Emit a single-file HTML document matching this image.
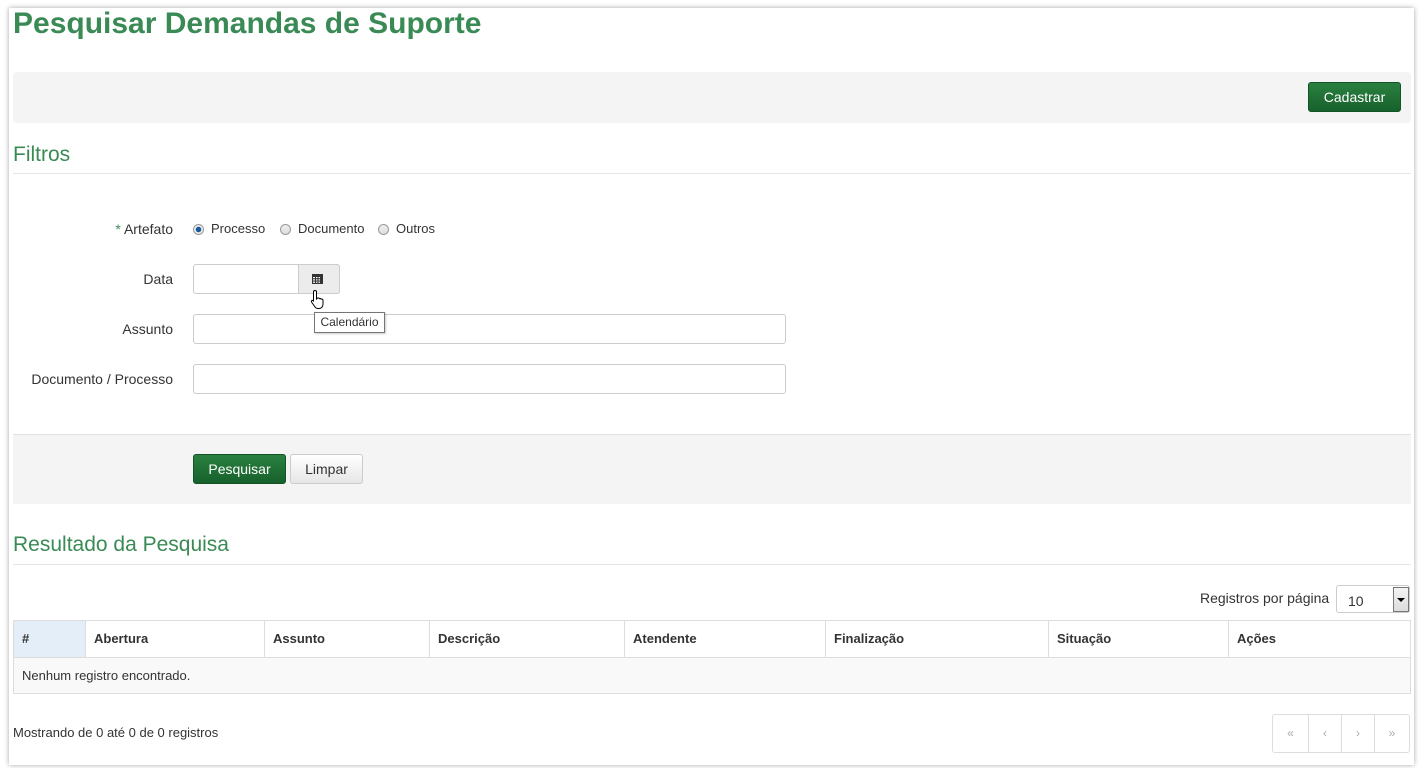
<!DOCTYPE html>
<html><head><meta charset="utf-8"><style>
*{box-sizing:border-box;margin:0;padding:0}
body{width:1423px;height:768px;background:#fff;font-family:"Liberation Sans",Arial,sans-serif;font-size:14px;color:#333;position:relative;overflow:hidden}
.a{position:absolute}
.page{left:9px;top:8px;width:1405px;height:757px;background:#fff;box-shadow:0 0 5px rgba(0,0,0,.35)}
.green{color:#3a8a55}
.bar{background:#f4f4f4;border-radius:4px}
.btn{border-radius:3px;text-align:center;font-size:14px}
.bg{background:linear-gradient(#2a8040,#17612c);color:#fff;border:1px solid #145326}
.lbl{text-align:right;width:160px;left:13px}
.inp{border:1px solid #ccc;border-radius:3px;background:#fff}
.rad{width:11px;height:11px;border-radius:50%;border:1px solid #999;background:linear-gradient(#eee,#ddd)}
.line{height:1px;background:#e5e5e5}
.th{font-weight:bold;font-size:13px;top:631px}
</style></head><body>
<div class="a page"></div>
<div class="a green" style="left:13px;top:7px;font-size:30px;font-weight:bold">Pesquisar Demandas de Suporte</div>
<div class="a bar" style="left:13px;top:72px;width:1398px;height:51px"></div>
<div class="a btn bg" style="left:1308px;top:82px;width:93px;height:30px;line-height:28px">Cadastrar</div>
<div class="a green" style="left:13px;top:143px;font-size:21px">Filtros</div>
<div class="a line" style="left:13px;top:173px;width:1398px"></div>

<div class="a lbl" style="top:221px"><span style="color:#3a8a55">*</span> Artefato</div>
<div class="a rad" style="left:193px;top:224px;background:radial-gradient(#1a5a9a 0 2.5px,#eee 3px)"></div>
<div class="a" style="left:211px;top:221px;font-size:13px">Processo</div>
<div class="a rad" style="left:280px;top:224px"></div>
<div class="a" style="left:298px;top:221px;font-size:13px">Documento</div>
<div class="a rad" style="left:378px;top:224px"></div>
<div class="a" style="left:396px;top:221px;font-size:13px">Outros</div>

<div class="a lbl" style="top:271px">Data</div>
<div class="a inp" style="left:193px;top:264px;width:147px;height:30px"></div>
<div class="a" style="left:298px;top:264px;width:42px;height:30px;background:#ececec;border:1px solid #ccc;border-radius:0 3px 3px 0"></div>
<svg class="a" style="left:312px;top:273px" width="11" height="11" viewBox="0 0 11 11"><rect x="0" y="1" width="11" height="10" fill="#333"/><g fill="#fff"><rect x="1" y="4" width="2" height="1.2"/><rect x="4" y="4" width="1.5" height="1.2"/><rect x="6.5" y="4" width="1.5" height="1.2"/><rect x="1" y="6.3" width="2" height="1.2"/><rect x="4" y="6.3" width="1.5" height="1.2"/><rect x="6.5" y="6.3" width="1.5" height="1.2"/><rect x="1" y="8.6" width="2" height="1.2"/><rect x="4" y="8.6" width="1.5" height="1.2"/><rect x="6.5" y="8.6" width="1.5" height="1.2"/></g></svg>

<div class="a lbl" style="top:321px">Assunto</div>
<div class="a inp" style="left:193px;top:314px;width:593px;height:30px"></div>
<svg class="a" style="left:310px;top:289px" width="18" height="22" viewBox="0 0 18 22"><path d="M5 1.5c1 0 1.5.6 1.5 1.5v7l1-1c.8-.4 1.6 0 1.8.6.7-.4 1.6 0 1.8.6.8-.4 1.7 0 1.900.8V15c0 2.5-1.5 4.5-4 4.5H8c-1.5 0-2.5-.8-3.300-2L1.5 13c-.5-.8.2-1.800 1.2-1.5L3.5 12V3c0-.9.5-1.5 1.5-1.5z" fill="#fff" stroke="#000" stroke-width="1"/></svg>
<div class="a" style="left:314px;top:312px;width:71px;height:21px;background:#fff;border:1px solid #767676;font-size:12px;line-height:19px;text-align:center;box-shadow:1px 1px 2px rgba(0,0,0,.2)">Calendário</div>

<div class="a lbl" style="top:371px">Documento / Processo</div>
<div class="a inp" style="left:193px;top:364px;width:593px;height:30px"></div>

<div class="a" style="left:13px;top:434px;width:1398px;height:70px;background:#f4f4f4;border-top:1px solid #e2e2e2"></div>
<div class="a btn bg" style="left:193px;top:454px;width:93px;height:30px;line-height:28px">Pesquisar</div>
<div class="a btn" style="left:290px;top:454px;width:73px;height:30px;line-height:28px;background:linear-gradient(#fff,#e6e6e6);border:1px solid #ccc">Limpar</div>

<div class="a green" style="left:13px;top:533px;font-size:21px">Resultado da Pesquisa</div>
<div class="a line" style="left:13px;top:564px;width:1398px"></div>

<div class="a" style="left:1200px;top:590px">Registros por página</div>
<div class="a inp" style="left:1336px;top:585px;width:74px;height:28px"></div>
<div class="a" style="left:1348px;top:593px">10</div>
<div class="a" style="left:1393px;top:587px;width:16px;height:25px;background:linear-gradient(#f4f4f4,#ddd);border:1px solid #777"></div>
<div class="a" style="left:1397px;top:598px;border-left:4px solid transparent;border-right:4px solid transparent;border-top:4px solid #000"></div>

<div class="a" style="left:13px;top:620px;width:1398px;height:74px;border:1px solid #ddd"></div>
<div class="a" style="left:14px;top:621px;width:71px;height:36px;background:#e3eef8"></div>
<div class="a" style="left:14px;top:657px;width:1396px;height:36px;background:#f9f9f9;border-top:1px solid #ddd"></div>
<div class="a" style="left:85px;top:621px;width:1px;height:36px;background:#ddd"></div>
<div class="a" style="left:264px;top:621px;width:1px;height:36px;background:#ddd"></div>
<div class="a" style="left:429px;top:621px;width:1px;height:36px;background:#ddd"></div>
<div class="a" style="left:624px;top:621px;width:1px;height:36px;background:#ddd"></div>
<div class="a" style="left:825px;top:621px;width:1px;height:36px;background:#ddd"></div>
<div class="a" style="left:1048px;top:621px;width:1px;height:36px;background:#ddd"></div>
<div class="a" style="left:1228px;top:621px;width:1px;height:36px;background:#ddd"></div>
<div class="a th" style="left:22px">#</div>
<div class="a th" style="left:94px">Abertura</div>
<div class="a th" style="left:273px">Assunto</div>
<div class="a th" style="left:438px">Descrição</div>
<div class="a th" style="left:633px">Atendente</div>
<div class="a th" style="left:834px">Finalização</div>
<div class="a th" style="left:1057px">Situação</div>
<div class="a th" style="left:1237px">Ações</div>
<div class="a" style="font-size:13px;top:668px;left:22px">Nenhum registro encontrado.</div>

<div class="a" style="font-size:13px;top:725px;left:13px">Mostrando de 0 até 0 de 0 registros</div>
<div class="a" style="left:1272px;top:714px;width:138px;height:39px;border:1px solid #ddd;border-radius:3px;display:flex;color:#aaa;font-size:12px">
<div style="width:36px;border-right:1px solid #ddd;text-align:center;line-height:37px">«</div>
<div style="width:33px;border-right:1px solid #ddd;text-align:center;line-height:37px">‹</div>
<div style="width:33px;border-right:1px solid #ddd;text-align:center;line-height:37px">›</div>
<div style="flex:1;text-align:center;line-height:37px">»</div>
</div>
</body></html>
